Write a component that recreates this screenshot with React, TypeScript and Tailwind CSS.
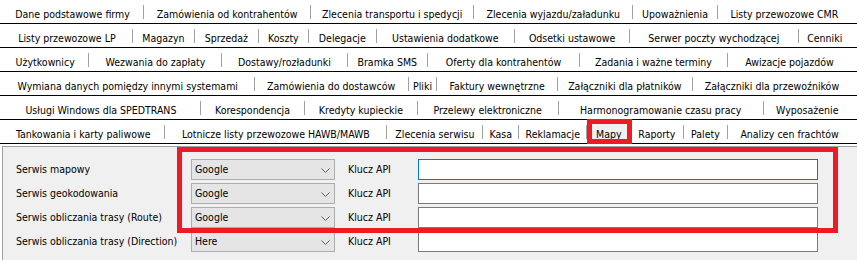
import React from "react";

type Tab = { label: string; grow: string; active?: boolean };

// grow values = tab widths in the original, so each row stretches the same way
const rows: Tab[][] = [
  [
    { label: "Dane podstawowe firmy", grow: "grow-[142]" },
    { label: "Zamówienia od kontrahentów", grow: "grow-[167]" },
    { label: "Zlecenia transportu i spedycji", grow: "grow-[163]" },
    { label: "Zlecenia wyjazdu/załadunku", grow: "grow-[159]" },
    { label: "Upoważnienia", grow: "grow-[84]" },
    { label: "Listy przewozowe CMR", grow: "grow-[134]" },
  ],
  [
    { label: "Listy przewozowe LP", grow: "grow-[131]" },
    { label: "Magazyn", grow: "grow-[62]" },
    { label: "Sprzedaż", grow: "grow-[63]" },
    { label: "Koszty", grow: "grow-[50]" },
    { label: "Delegacje", grow: "grow-[67]" },
    { label: "Ustawienia dodatkowe", grow: "grow-[139]" },
    { label: "Odsetki ustawowe", grow: "grow-[115]" },
    { label: "Serwer poczty wychodzącej", grow: "grow-[169]" },
    { label: "Cenniki", grow: "grow-[53]" },
  ],
  [
    { label: "Użytkownicy", grow: "grow-[87]" },
    { label: "Wezwania do zapłaty", grow: "grow-[133]" },
    { label: "Dostawy/rozładunki", grow: "grow-[125]" },
    { label: "Bramka SMS", grow: "grow-[80]" },
    { label: "Oferty dla kontrahentów", grow: "grow-[152]" },
    { label: "Zadania i ważne terminy", grow: "grow-[148]" },
    { label: "Awizacje pojazdów", grow: "grow-[124]" },
  ],
  [
    { label: "Wymiana danych pomiędzy innymi systemami", grow: "grow-[253]" },
    { label: "Zamówienia do dostawców", grow: "grow-[154]" },
    { label: "Pliki", grow: "grow-[28]" },
    { label: "Faktury wewnętrzne", grow: "grow-[120]" },
    { label: "Załączniki dla płatników", grow: "grow-[135]" },
    { label: "Załączniki dla przewoźników", grow: "grow-[159]" },
  ],
  [
    { label: "Usługi Windows dla SPEDTRANS", grow: "grow-[199]" },
    { label: "Korespondencja", grow: "grow-[104]" },
    { label: "Kredyty kupieckie", grow: "grow-[112]" },
    { label: "Przelewy elektroniczne", grow: "grow-[141]" },
    { label: "Harmonogramowanie czasu pracy", grow: "grow-[205]" },
    { label: "Wyposażenie", grow: "grow-[88]" },
  ],
  [
    { label: "Tankowania i karty paliwowe", grow: "grow-[164]" },
    { label: "Lotnicze listy przewozowe HAWB/MAWB", grow: "grow-[223]" },
    { label: "Zlecenia serwisu", grow: "grow-[96]" },
    { label: "Kasa", grow: "grow-[35]" },
    { label: "Reklamacje", grow: "grow-[68]" },
    { label: "Mapy", grow: "grow-[43]", active: true },
    { label: "Raporty", grow: "grow-[52]" },
    { label: "Palety", grow: "grow-[44]" },
    { label: "Analizy cen frachtów", grow: "grow-[124]" },
  ],
];

const fields = [
  { label: "Serwis mapowy", value: "Google", focused: true },
  { label: "Serwis geokodowania", value: "Google" },
  { label: "Serwis obliczania trasy (Route)", value: "Google" },
  { label: "Serwis obliczania trasy (Direction)", value: "Here" },
];

function Combo({ value }: { value: string }) {
  return (
    <div className="flex items-center justify-between w-[144px] h-[21px] bg-[#e5e5e5] border border-[#adadad] pl-[3px] pr-[4px]">
      <span>{value}</span>
      <svg width="9" height="6" viewBox="0 0 9 6" className="mt-[2px]">
        <polyline points="0.5,0.5 4.5,4.5 8.5,0.5" fill="none" stroke="#606060" strokeWidth="1" />
      </svg>
    </div>
  );
}

export default function App() {
  return (
    <div className="w-[857px] h-[260px] overflow-hidden bg-white text-black text-[10.5px] font-['DejaVu_Sans_Condensed','DejaVu_Sans',sans-serif] font-stretch-condensed">
      {/* Tab rows */}
      <div className="flex flex-col">
        {rows.map((row, ri) => (
          <div key={ri} className="flex h-[24px] border-b border-black pl-[2px] pr-[6px]">
            {row.map((tab, ti) => (
              <React.Fragment key={tab.label}>
                {ti > 0 && <div className="w-px h-[14px] mt-[5px] shrink-0 bg-[#a0a0a0]" />}
                <div
                  className={`relative flex justify-center basis-0 min-w-0 whitespace-nowrap pt-[8px] leading-[13px] ${tab.grow} ${
                    tab.active ? "bg-[#f0f0f0]" : ""
                  }`}
                >
                  {tab.label}
                  {tab.active && (
                    <div className="absolute left-0 top-[-1px] w-[45px] h-[25px] border-[5px] border-[#ed1c24]" />
                  )}
                </div>
              </React.Fragment>
            ))}
          </div>
        ))}
      </div>

      {/* Tab page */}
      <div className="relative ml-[2px] mt-[2px] border-l border-t border-[#a0a0a0] bg-[#f0f0f0] pl-[13px] pt-[12px] pb-[12px]">
        <div className="flex flex-col gap-[3px]">
          {fields.map((f) => (
            <div key={f.label} className="flex items-center h-[21px]">
              <div className="w-[175px] whitespace-nowrap">{f.label}</div>
              <Combo value={f.value} />
              <div className="ml-[13px] w-[70px]">Klucz API</div>
              <div
                className={`w-[400px] h-[21px] bg-white border ${
                  f.focused ? "border-[#0078d7]" : "border-[#7a7a7a]"
                }`}
              />
            </div>
          ))}
        </div>
        {/* red annotation frame */}
        <div className="pointer-events-none absolute left-[174px] top-0 w-[661px] h-[86px] border-[5px] border-[#ed1c24]" />
      </div>
    </div>
  );
}
